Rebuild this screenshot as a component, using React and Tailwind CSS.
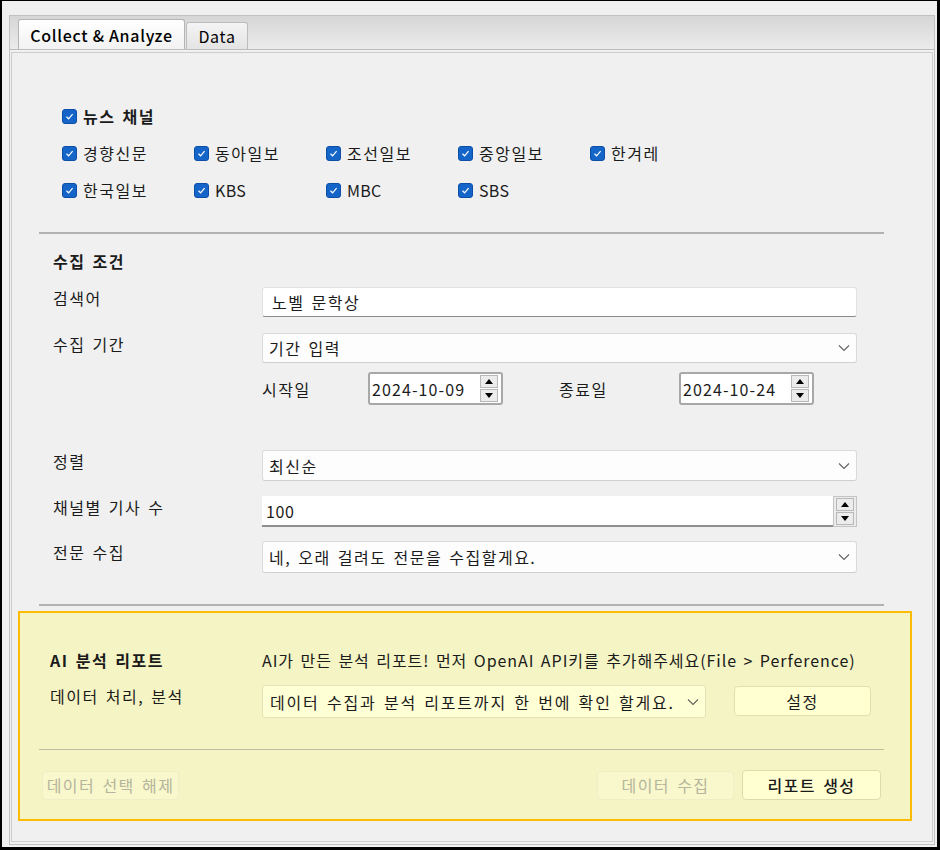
import React from 'react';

const FONT = "font-['Noto_Sans_CJK_KR','Noto_Sans',sans-serif]";

function Check({ label, bold, latin }) {
  return (
    <div className="flex items-center gap-[6px] w-[132px]">
      <span className="w-[15px] h-[15px] rounded-[3px] bg-[#1565c8] border border-[#0d4ea6] flex items-center justify-center">
        <svg width="11" height="11" viewBox="0 0 11 11">
          <polyline points="2.5,5.8 4.6,7.8 8.6,3.2" fill="none" stroke="white" strokeWidth="1.2" />
        </svg>
      </span>
      <span className={`${bold ? 'font-bold' : ''} ${latin ? 'tracking-[0.3px]' : ''}`}>{label}</span>
    </div>
  );
}

function Chevron() {
  return (
    <svg width="12" height="8" viewBox="0 0 12 8" className="shrink-0">
      <polyline points="1,1.5 6,6.5 11,1.5" fill="none" stroke="#606060" strokeWidth="1.1" />
    </svg>
  );
}

function Combo({ value, className = '' }) {
  return (
    <div className={`flex items-center justify-between pl-[6px] pr-[6px] rounded-[3px] border border-[#dadada] border-b-[#cfcfcf] bg-[#fdfdfd] ${className}`}>
      <span>{value}</span>
      <Chevron />
    </div>
  );
}

function SpinButtons() {
  return (
    <div className="flex flex-col gap-[1px]">
      <div className="w-[18px] h-[13px] bg-[#ececec] border border-[#b8b8b8] flex items-center justify-center">
        <svg width="8" height="5" viewBox="0 0 8 5"><polygon points="0,5 4,0 8,5" fill="#000" /></svg>
      </div>
      <div className="w-[18px] h-[13px] bg-[#ececec] border border-[#b8b8b8] flex items-center justify-center">
        <svg width="8" height="5" viewBox="0 0 8 5"><polygon points="0,0 8,0 4,5" fill="#000" /></svg>
      </div>
    </div>
  );
}

function DateBox({ value }) {
  return (
    <div className="w-[135px] h-[33px] flex items-center justify-between pl-[2px] pr-[3px] bg-white border-2 border-[#a8a8a8] rounded-[3px]">
      <span className="tracking-[1.1px]">{value}</span>
      <SpinButtons />
    </div>
  );
}

function Label({ children }) {
  return <div className="w-[209px] shrink-0 leading-[22px]">{children}</div>;
}

export default function App() {
  return (
    <div className={`${FONT} w-[940px] h-[850px] bg-[#f0f0f0] border-black border-t border-l-2 border-r-[3px] border-b-[3px] pl-[7px] pt-[14px] pr-[2px] pb-[2px] text-[16px] tracking-[1.5px] [word-spacing:2px] text-[#1b1b1b]`}>
      <div className="h-full flex flex-col border border-[#c0c0c0]">
        {/* tab bar */}
        <div className="h-[34px] flex items-end pl-[8px] bg-gradient-to-b from-[#d6d6d6] to-[#ebebeb] border-b border-[#bdbdbd]">
          <div className="h-[30px] w-[167px] flex items-center justify-center bg-gradient-to-b from-[#ffffff] to-[#f2f2f2] border border-b-0 border-[#b4b4b4] rounded-t-[3px] text-[16px] font-medium text-black tracking-[0.7px] [word-spacing:0px]">
            Collect &amp; Analyze
          </div>
          <div className="h-[27px] w-[62px] ml-[1px] flex items-center justify-center bg-gradient-to-b from-[#f4f4f4] to-[#e4e4e4] border border-b-0 border-[#bcbcbc] rounded-t-[3px] text-[16px] text-black tracking-[0.7px]">
            Data
          </div>
        </div>
        <div className="flex-1 mt-[2px] mx-[1px] mb-[2px] border border-[#cdcdcd] flex flex-col">
          {/* channels */}
          <div className="ml-[50px] mt-[52px] flex flex-col gap-[15px]">
            <div className="h-[22px] flex items-center"><Check label="뉴스 채널" bold /></div>
            <div className="h-[22px] flex items-center">
              <Check label="경향신문" />
              <Check label="동아일보" />
              <Check label="조선일보" />
              <Check label="중앙일보" />
              <Check label="한겨레" />
            </div>
            <div className="h-[22px] flex items-center">
              <Check label="한국일보" />
              <Check label="KBS" latin />
              <Check label="MBC" latin />
              <Check label="SBS" latin />
            </div>
          </div>

          <div className="ml-[27px] w-[845px] mt-[31px] h-[2px] bg-[#b2b2b2]" />

          {/* form */}
          <div className="ml-[41px] flex flex-col">
            <div className="mt-[16px] h-[22px] leading-[22px] font-bold">수집 조건</div>

            <div className="mt-[15px] flex items-start">
              <Label>검색어</Label>
              <div className="w-[595px] h-[30px] flex items-center pl-[9px] bg-white border border-[#e2e2e2] border-b-[#8c8c8c] rounded-[3px]">
                노벨 문학상
              </div>
            </div>

            <div className="mt-[16px] flex items-start">
              <Label>수집 기간</Label>
              <Combo value="기간 입력" className="w-[595px] h-[30px]" />
            </div>

            <div className="mt-[9px] flex items-center h-[33px] pl-[209px]">
              <div className="w-[106px]">시작일</div>
              <DateBox value="2024-10-09" />
              <div className="ml-[56px] w-[120px]">종료일</div>
              <DateBox value="2024-10-24" />
            </div>

            <div className="mt-[45px] flex items-start">
              <Label>정렬</Label>
              <Combo value="최신순" className="w-[595px] h-[31px]" />
            </div>

            <div className="mt-[15px] flex items-start">
              <Label>채널별 기사 수</Label>
              <div className="w-[595px] h-[31px] flex items-stretch">
                <div className="flex-1 flex items-center pl-[4px] bg-white border-b-2 border-[#8e8e8e] tracking-[0.6px]">100</div>
                <div className="w-[24px] flex items-center justify-center border border-[#c4c4c4] bg-[#ececec]">
                  <SpinButtons />
                </div>
              </div>
            </div>

            <div className="mt-[14px] flex items-start">
              <Label>전문 수집</Label>
              <Combo value="네, 오래 걸려도 전문을 수집할게요." className="w-[595px] h-[32px]" />
            </div>
          </div>

          <div className="ml-[27px] w-[845px] mt-[31px] h-[2px] bg-[#b2b2b2]" />

          {/* AI panel */}
          <div className="ml-[6px] mt-[5px] w-[894px] h-[210px] bg-[#f4f4c4] border-2 border-[#fcbc04] flex flex-col">
            <div className="pl-[30px] mt-[36px] flex items-center h-[22px]">
              <div className="w-[212px] font-bold">AI 분석 리포트</div>
              <div className="tracking-[0.95px] whitespace-nowrap">AI가 만든 분석 리포트! 먼저 OpenAI API키를 추가해주세요(File &gt; Perference)</div>
            </div>
            <div className="pl-[30px] mt-[14px] flex items-start">
              <div className="w-[212px] leading-[22px]">데이터 처리, 분석</div>
              <div className="w-[444px] h-[33px] flex items-center justify-between pl-[7px] pr-[6px] bg-[#ffffd6] border border-[#e4e2b6] rounded-[3px]">
                <span className="whitespace-nowrap tracking-[1.8px]">데이터 수집과 분석 리포트까지 한 번에 확인 할게요.</span>
                <Chevron />
              </div>
              <div className="ml-[28px] mt-[1px] w-[137px] h-[30px] flex items-center justify-center bg-[#ffffd2] border border-[#e2e0b0] rounded-[4px]">
                설정
              </div>
            </div>
            <div className="ml-[19px] w-[845px] mt-[31px] h-[1px] bg-[#bdbc9c]" />
            <div className="mt-[20px] pl-[22px] pr-[29px] flex items-center">
              <div className="w-[137px] h-[29px] flex items-center justify-center bg-[#f8f8cc] border border-[#efeec6] rounded-[4px] text-[#b5b49c] whitespace-nowrap">
                데이터 선택 해제
              </div>
              <div className="flex-1" />
              <div className="w-[137px] h-[29px] flex items-center justify-center bg-[#f8f8cc] border border-[#efeec6] rounded-[4px] text-[#b5b49c]">
                데이터 수집
              </div>
              <div className="ml-[8px] w-[139px] h-[30px] flex items-center justify-center bg-[#ffffd2] border border-[#dedcae] rounded-[4px] font-medium">
                리포트 생성
              </div>
            </div>
          </div>
        </div>
      </div>
    </div>
  );
}
